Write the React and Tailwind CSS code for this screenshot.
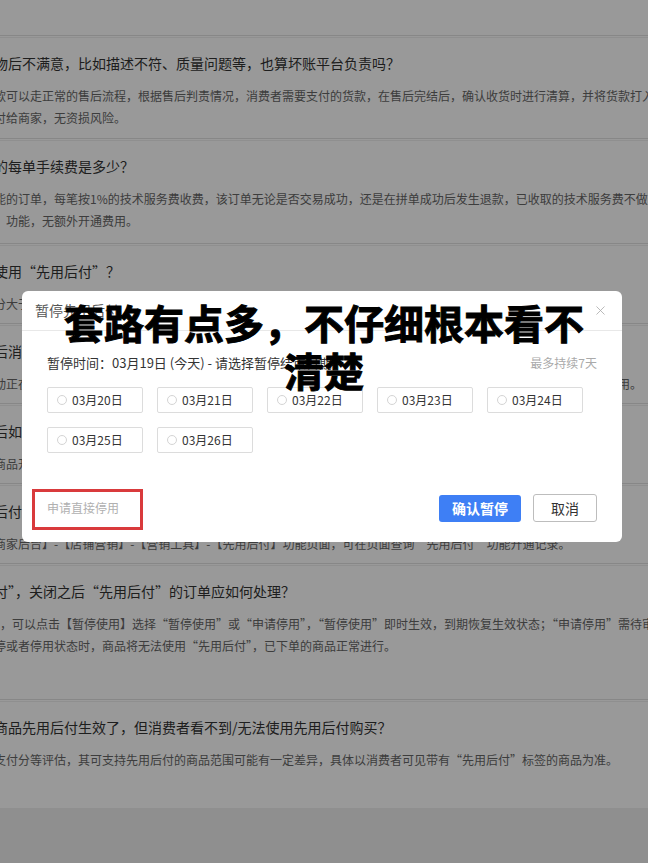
import React from "react";
import { X } from "lucide-react";

const font = { fontFamily: '"Noto Sans CJK SC", "Noto Sans", sans-serif' };

const sections = [
  {
    title: "物后不满意，比如描述不符、质量问题等，也算坏账平台负责吗？",
    lines: [
      "款可以走正常的售后流程，根据售后判责情况，消费者需要支付的货款，在售后完结后，确认收货时进行清算，并将货款打入商家账户。",
      "付给商家，无资损风险。",
    ],
    pb: "pb-[9px]",
  },
  {
    title: "的每单手续费是多少？",
    lines: [
      "能的订单，每笔按1%的技术服务费收费，该订单无论是否交易成功，还是在拼单成功后发生退款，已收取的技术服务费不做退还。",
      "”功能，无额外开通费用。",
    ],
    pb: "pb-[11px]",
  },
  {
    title: "使用“先用后付”？",
    lines: ["分大于等于550分的店铺可开通使用，具体以商家后台展示为准。"],
    pb: "pb-[8px]",
  },
  {
    title: "后消费者下单有什么变化？",
    lines: [
      "动正在参与的营销活动不受影响，开通后消费者可以在商品详情页及下单页选择“先用后付”方式购买，不影响正常使用。",
    ],
    pb: "pb-[8px]",
  },
  {
    title: "后如何查看开通记录？",
    lines: ["商品开通记录可在商家后台查看。"],
    pb: "pb-[8px]",
  },
  {
    title: "后付”功能开通入口在哪里？",
    lines: [
      "商家后台】-【店铺营销】-【营销工具】-【先用后付】功能页面，可在页面查询“先用后付”功能开通记录。",
    ],
    pb: "pb-[8px]",
  },
  {
    title: "付”，关闭之后“先用后付”的订单应如何处理？",
    lines: [
      "”，可以点击【暂停使用】选择“暂停使用”或“申请停用”，“暂停使用”即时生效，到期恢复生效状态；“申请停用”需待审核通过后生效。",
      "停或者停用状态时，商品将无法使用“先用后付”，已下单的商品正常进行。",
    ],
    pb: "pb-[42px]",
  },
  {
    title: "商品先用后付生效了，但消费者看不到/无法使用先用后付购买？",
    lines: [
      "支付分等评估，其可支持先用后付的商品范围可能有一定差异，具体以消费者可见带有“先用后付”标签的商品为准。",
    ],
    pb: "pb-[37px]",
  },
];

const dates = ["03月20日", "03月21日", "03月22日", "03月23日", "03月24日", "03月25日", "03月26日"];

const Divider = () => (
  <div className="h-[3px] border-t border-b border-t-[#e2e2e2] border-b-[#efefef]" />
);

const Section = ({ title, lines, pb }) => (
  <div>
    <Divider />
    <div className={`pt-[15px] ${pb} -ml-[6px] whitespace-nowrap`}>
      <div className="text-[14px] leading-[20px] text-[#333]">{title}</div>
      <div className="mt-[12px]">
        {lines.map((line, i) => (
          <div key={i} className="text-[12px] leading-[22px] text-[#666]">
            {line}
          </div>
        ))}
      </div>
    </div>
  </div>
);

const DateChip = ({ label }) => (
  <div className="flex h-[26px] w-[96px] items-center gap-[5px] rounded-[2px] border border-[#dcdcdc] pl-[9px]">
    <span className="h-[10px] w-[10px] rounded-full border border-[#d4d4d4]" />
    <span className="text-[12px] text-[#333]">{label}</span>
  </div>
);

const PauseModal = () => (
  <div className="absolute left-[22px] top-[291px] w-[600px] rounded-[6px] bg-white">
    <div className="flex h-[40px] items-center justify-between border-b border-[#e8e8e8] pl-[13px] pr-[14px]">
      <span className="text-[14px] text-[#555]">暂停先用后付</span>
      <X size={15} strokeWidth={1.3} className="text-[#aaa]" />
    </div>
    <div className="px-[25px] pb-[20px] pt-[22px]">
      <div className="flex items-center justify-between leading-[20px]">
        <span className="text-[13px] text-[#333]">暂停时间：03月19日 (今天) - 请选择暂停结束日期</span>
        <span className="text-[12px] text-[#aaa]">最多持续7天</span>
      </div>
      <div className="mt-[14px] flex flex-wrap gap-[14px]">
        {dates.map((d) => (
          <DateChip key={d} label={d} />
        ))}
      </div>
      <div className="mt-[41px] flex items-center justify-between">
        <span className="text-[12px] text-[#b0b0b0]">申请直接停用</span>
        <div className="flex items-center gap-[12px]">
          <button className="h-[27px] w-[82px] rounded-[3px] bg-[#3e7ff5] text-[14px] font-bold text-white">
            确认暂停
          </button>
          <button className="h-[28px] w-[64px] rounded-[3px] border border-[#bdbdbd] bg-white text-[14px] text-[#333]">
            取消
          </button>
        </div>
      </div>
    </div>
    <div className="absolute left-[10px] top-[198px] h-[41px] w-[111px] border-[3px] border-[#d93a3c]" />
  </div>
);

export default function App() {
  return (
    <div className="relative h-[863px] w-full overflow-hidden bg-[#eeeeee]" style={font}>
      <div className="bg-white">
        <div className="h-[35px]" />
        {sections.map((s, i) => (
          <Section key={i} {...s} />
        ))}
      </div>

      <div className="absolute inset-0 bg-black/40" />

      <PauseModal />

      <div className="absolute left-[54px] top-[298px] w-[540px] text-center text-[40px] font-bold leading-[48px] text-black [-webkit-text-stroke:1px_black]">
        套路有点多，不仔细根本看不清楚
      </div>
    </div>
  );
}
